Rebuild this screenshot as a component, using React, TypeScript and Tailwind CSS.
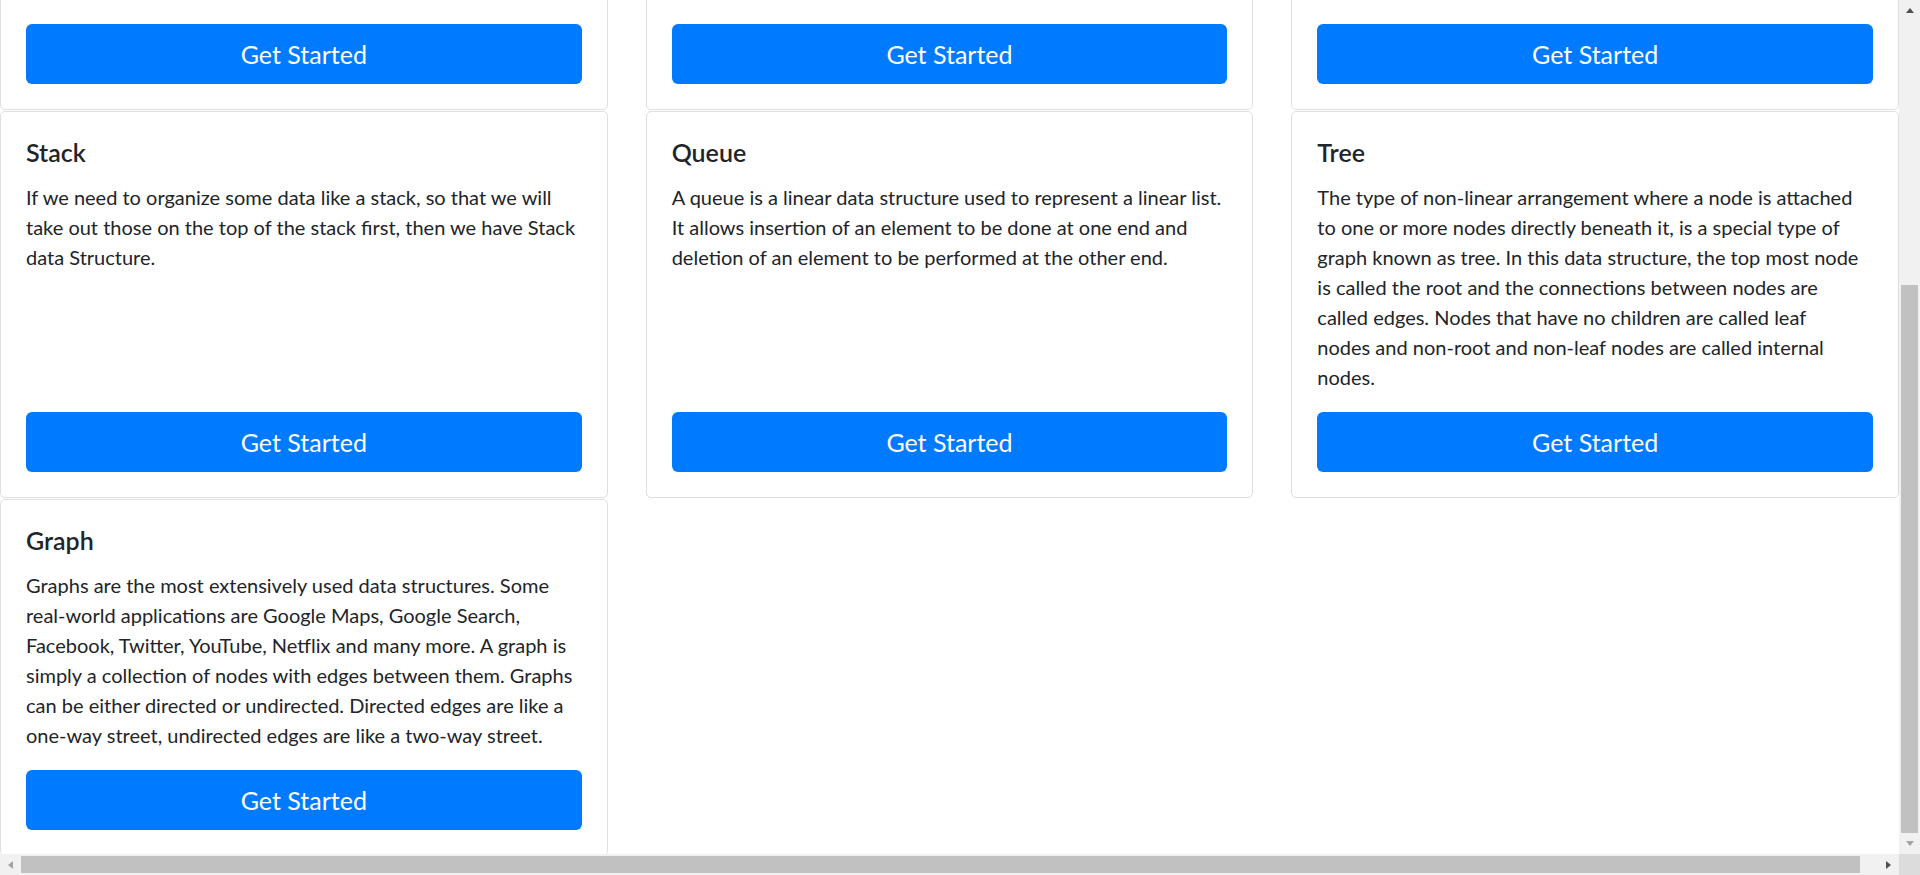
import React from "react";

const cards = [
  {
    title: "Stack",
    lines: [
      "If we need to organize some data like a stack, so that we will",
      "take out those on the top of the stack first, then we have Stack",
      "data Structure.",
    ],
  },
  {
    title: "Queue",
    lines: [
      "A queue is a linear data structure used to represent a linear list.",
      "It allows insertion of an element to be done at one end and",
      "deletion of an element to be performed at the other end.",
    ],
  },
  {
    title: "Tree",
    lines: [
      "The type of non-linear arrangement where a node is attached",
      "to one or more nodes directly beneath it, is a special type of",
      "graph known as tree. In this data structure, the top most node",
      "is called the root and the connections between nodes are",
      "called edges. Nodes that have no children are called leaf",
      "nodes and non-root and non-leaf nodes are called internal",
      "nodes.",
    ],
  },
  {
    title: "Graph",
    lines: [
      "Graphs are the most extensively used data structures. Some",
      "real-world applications are Google Maps, Google Search,",
      "Facebook, Twitter, YouTube, Netflix and many more. A graph is",
      "simply a collection of nodes with edges between them. Graphs",
      "can be either directed or undirected. Directed edges are like a",
      "one-way street, undirected edges are like a two-way street.",
    ],
  },
];

function Button() {
  return (
    <button className="mt-auto h-[60px] w-full shrink-0 rounded-[6px] bg-[#007bff] text-[25px] leading-[30px] font-normal text-white">
      Get Started
    </button>
  );
}

function Card({ title, lines }: { title: string; lines: string[] }) {
  return (
    <div className="flex flex-col rounded-[5px] border border-[#dfdfdf] bg-white px-[25px] py-[25px]">
      <h5 className="mb-[15px] text-[25px] leading-[30px] font-semibold text-[#212529]">{title}</h5>
      <p className="mb-[20px] text-[20px] leading-[30px] text-[#212529]">
        {lines.map((l, i) => (
          <span key={i} className="block whitespace-nowrap">
            {l}
          </span>
        ))}
      </p>
      <Button />
    </div>
  );
}

function TopCard({ text }: { text?: string }) {
  return (
    <div className="flex h-[162px] flex-col rounded-[5px] border border-[#dfdfdf] bg-white px-[25px] py-[25px]">
      <div className="mb-[20px] h-[30px]">
        <p className="whitespace-nowrap text-[20px] leading-[25px] text-[#212529]">{text ?? ""}</p>
      </div>
      <Button />
    </div>
  );
}

function Tri({ dir, color }: { dir: "up" | "down" | "left" | "right"; color: string }) {
  const pts =
    dir === "up"
      ? "0,5 8,5 4,0"
      : dir === "down"
      ? "0,0 8,0 4,5"
      : dir === "left"
      ? "5,0 5,8 0,4"
      : "0,0 0,8 5,4";
  const w = dir === "up" || dir === "down" ? 8 : 5;
  const h = dir === "up" || dir === "down" ? 5 : 8;
  return (
    <svg width={w} height={h} viewBox={`0 0 ${w} ${h}`}>
      <polygon points={pts} fill={color} />
    </svg>
  );
}

export default function App() {
  return (
    <div className="flex h-[875px] w-[1920px] flex-col overflow-hidden bg-white font-[Lato,'Noto_Sans',sans-serif]">
      <div className="flex h-[854px] w-[1920px]">
        <div className="h-[854px] w-[1899px] overflow-hidden">
          <div className="-mt-[52px] grid w-[1899px] grid-cols-3 gap-x-[38px] gap-y-[1px]">
            <TopCard />
            <TopCard />
            <TopCard text="elements which are accessed using their index (position)." />
            {cards.map((c) => (
              <Card key={c.title} title={c.title} lines={c.lines} />
            ))}
          </div>
        </div>
        <div className="flex h-[854px] w-[21px] flex-col bg-[#f1f1f1]">
          <div className="flex h-[21px] items-center justify-center">
            <Tri dir="up" color="#505050" />
          </div>
          <div className="flex flex-1 flex-col justify-end px-[2px]">
            <div className="h-[548px] w-full bg-[#c1c1c1]" />
          </div>
          <div className="flex h-[21px] items-center justify-center">
            <Tri dir="down" color="#a3a3a3" />
          </div>
        </div>
      </div>
      <div className="flex h-[21px] w-[1920px]">
        <div className="flex h-[21px] w-[1899px] bg-[#f1f1f1]">
          <div className="flex w-[21px] items-center justify-center">
            <Tri dir="left" color="#a3a3a3" />
          </div>
          <div className="flex flex-1 items-center">
            <div className="h-[17px] w-[1839px] bg-[#c1c1c1]" />
          </div>
          <div className="flex w-[21px] items-center justify-center">
            <Tri dir="right" color="#505050" />
          </div>
        </div>
        <div className="h-[21px] w-[21px] bg-[#dcdcdc]" />
      </div>
    </div>
  );
}
